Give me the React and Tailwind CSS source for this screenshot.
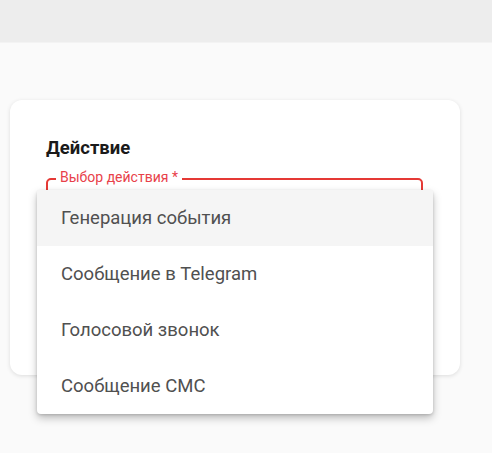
import React from "react";

const options = [
  "Генерация события",
  "Сообщение в Telegram",
  "Голосовой звонок",
  "Сообщение СМС",
];

const App = () => {
  return (
    <div
      className="min-h-screen bg-[#fafafa]"
      style={{ fontFamily: "Roboto, 'Noto Sans', sans-serif" }}
    >
      {/* top bar */}
      <header className="h-[43px] bg-[#ededed] border-b border-[#f3f3f3]" />

      <main className="pt-[57px] pl-[10px]">
        <div className="w-[450px] h-[275px] bg-white rounded-[12px] shadow-[0_1px_4px_rgba(0,0,0,0.12)] px-[36px] pt-[35px]">
          <h2 className="text-[18.5px] leading-[26px] font-bold text-[#1a1a1a]">
            Действие
          </h2>

          <div className="relative mt-[17px] w-[377px] h-[56px]">
            {/* outlined field */}
            <div className="absolute inset-0 border-2 border-[#e53935] rounded-[5px]" />
            <span className="absolute left-[10px] -top-[9px] px-[4px] bg-white text-[14px] leading-[16px] text-[#e8414a]">
              Выбор действия *
            </span>

            {/* dropdown menu */}
            <ul className="absolute left-[-9px] top-[12px] w-[396px] bg-white rounded-[4px] shadow-[0_4px_8px_rgba(0,0,0,0.25),0_1px_3px_rgba(0,0,0,0.15)] z-10">
              {options.map((opt, i) => (
                <li
                  key={opt}
                  className={`h-[56px] flex items-center pl-[24px] pt-[1px] text-[18.5px] text-[#505050] ${
                    i === 0 ? "bg-[#f5f5f5]" : ""
                  }`}
                >
                  {opt}
                </li>
              ))}
            </ul>
          </div>
        </div>
      </main>
    </div>
  );
};

export default App;
